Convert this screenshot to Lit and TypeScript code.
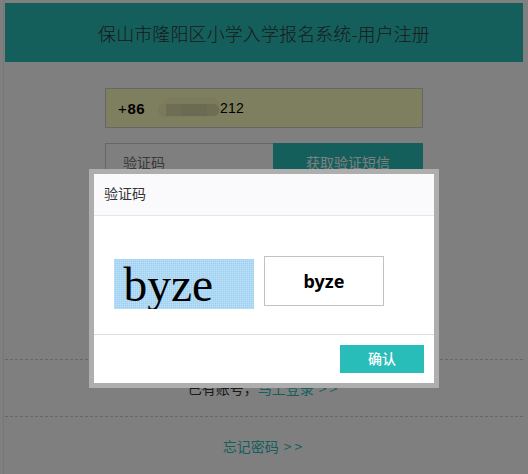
import { LitElement, html, css } from "lit";
import { customElement } from "lit/decorators.js";

@customElement("app-root")
export class AppRoot extends LitElement {
  static styles = css`
    :host {
      display: block;
      height: 474px;
      overflow: hidden;
      background: #fff;
      font-family: "Noto Sans CJK SC", "Liberation Sans", sans-serif;
      font-size: 14px;
      color: #333;
    }
    .page {
      margin: 0 5px 0 3px;
      padding: 3px 0 0 1px;
      border-left: 1px solid #eee;
      height: 471px;
    }
    .title {
      height: 59px;
      background: #28bdb9;
      display: flex;
      align-items: center;
      justify-content: center;
      font-size: 18px;
      font-weight: 300;
      letter-spacing: 0.1px;
      color: #333;
    }
    .form {
      width: 318px;
      margin: 26px auto 0;
      display: flex;
      flex-direction: column;
      gap: 15px;
      height: 271px;
    }
    .phone {
      position: relative;
      height: 40px;
      box-sizing: border-box;
      border: 1px solid #ccc;
      background: #faffbd;
      display: flex;
      align-items: center;
      padding-left: 12px;
      font-family: "Liberation Sans", sans-serif;
      color: #000;
    }
    .cc {
      width: 102px;
      font-size: 15px;
      letter-spacing: 0.6px;
      position: relative;
    }
    .num {
      position: relative;
      font-size: 14px;
      letter-spacing: 0.2px;
    }
    .smudge {
      position: absolute;
      border-radius: 7px;
    }
    .smudge.a {
      left: 52px;
      top: 14px;
      width: 62px;
      height: 14px;
      background: #f2f5b8;
    }
    .smudge.b {
      left: 59px;
      top: 8px;
      width: 54px;
      height: 20px;
      background: #f5f8ba;
    }
    .smudge.c {
      left: 60px;
      top: 15px;
      width: 53px;
      height: 12px;
      border-radius: 0 5px 5px 0;
      background: #deddaa;
    }
    .smudge.d {
      left: 75px;
      top: 15px;
      width: 26px;
      height: 12px;
      border-radius: 0;
      background: #d6d5a4;
    }
    .code {
      display: flex;
      height: 40px;
      box-sizing: border-box;
    }
    .code .ph {
      width: 168px;
      box-sizing: border-box;
      border: 1px solid #ccc;
      border-right: 0;
      padding: 0 0 2px 17px;
      display: flex;
      align-items: center;
      color: #757575;
    }
    .code .send {
      flex: 1;
      box-sizing: border-box;
      padding-bottom: 2px;
      background: #28bdb9;
      color: #fff;
      display: flex;
      align-items: center;
      justify-content: center;
    }
    .row {
      border-top: 1px dashed #ccc;
      display: flex;
      align-items: center;
      justify-content: center;
      box-sizing: border-box;
      height: 57px;
      color: #333;
      padding-bottom: 1px;
    }
    .row.last {
      height: 60px;
    }
    .link {
      color: #28bdb9;
    }
    .arrows {
      margin-left: 5px;
      letter-spacing: 3px;
    }
    .mask {
      position: fixed;
      inset: 0;
      background: rgba(0, 0, 0, 0.5);
    }
    .dialog {
      position: fixed;
      left: 89px;
      top: 169px;
      width: 350px;
      height: 219px;
      box-sizing: border-box;
      border: 5px solid #aeaeae;
      background: #fff;
      display: flex;
      flex-direction: column;
    }
    .dlg-head {
      height: 42px;
      box-sizing: border-box;
      background: #fafafc;
      border-bottom: 1px solid #e6e6e6;
      padding: 0 0 3px 10px;
      display: flex;
      align-items: center;
      color: #333;
    }
    .dlg-body {
      height: 119px;
      box-sizing: border-box;
      padding: 40px 0 0 20px;
      display: flex;
      gap: 10px;
      align-items: flex-start;
      border-bottom: 1px solid #ddd;
    }
    .captcha {
      margin-top: 3px;
      width: 140px;
      height: 50px;
      overflow: hidden;
      box-sizing: border-box;
      padding-left: 9.5px;
      background:
        linear-gradient(90deg, rgba(200, 232, 240, 0.45) 1px, transparent 1px) 0 0 / 2px 2px,
        linear-gradient(0deg, rgba(200, 232, 240, 0.45) 1px, transparent 1px) 0 0 / 2px 2px,
        #9ccdf6;
      font: 47.5px/53px "Liberation Serif", serif;
      color: #000;
    }
    .answer {
      width: 120px;
      height: 50px;
      box-sizing: border-box;
      border: 1px solid #c2c2c2;
      display: flex;
      align-items: center;
      justify-content: center;
      font: bold 18px "Noto Sans", sans-serif;
      color: #000;
    }
    .dlg-foot {
      flex: 1;
      display: flex;
      justify-content: flex-end;
      align-items: flex-start;
      padding: 10px 10px 0 0;
    }
    .ok {
      width: 84px;
      height: 28px;
      box-sizing: border-box;
      padding-bottom: 2px;
      background: #28bdb9;
      color: #fff;
      font-size: 14px;
      font-weight: 500;
      display: flex;
      align-items: center;
      justify-content: center;
    }
  `;

  render() {
    return html`
      <div class="page">
        <div class="title">保山市隆阳区小学入学报名系统-用户注册</div>
        <div class="form">
          <div class="phone">
            <span class="smudge a"></span>
            <span class="smudge b"></span>
            <span class="smudge c"></span>
            <span class="smudge d"></span>
            <span class="cc">+<b>86</b></span>
            <span class="num">212</span>
          </div>
          <div class="code">
            <div class="ph">验证码</div>
            <div class="send">获取验证短信</div>
          </div>
        </div>
        <div class="row">已有账号，<span class="link">马上登录<span class="arrows">&gt;&gt;</span></span></div>
        <div class="row last"><span class="link">忘记密码<span class="arrows">&gt;&gt;</span></span></div>
      </div>
      <div class="mask"></div>
      <div class="dialog">
        <div class="dlg-head">验证码</div>
        <div class="dlg-body">
          <div class="captcha">byze</div>
          <div class="answer">byze</div>
        </div>
        <div class="dlg-foot"><div class="ok">确认</div></div>
      </div>
    `;
  }
}
